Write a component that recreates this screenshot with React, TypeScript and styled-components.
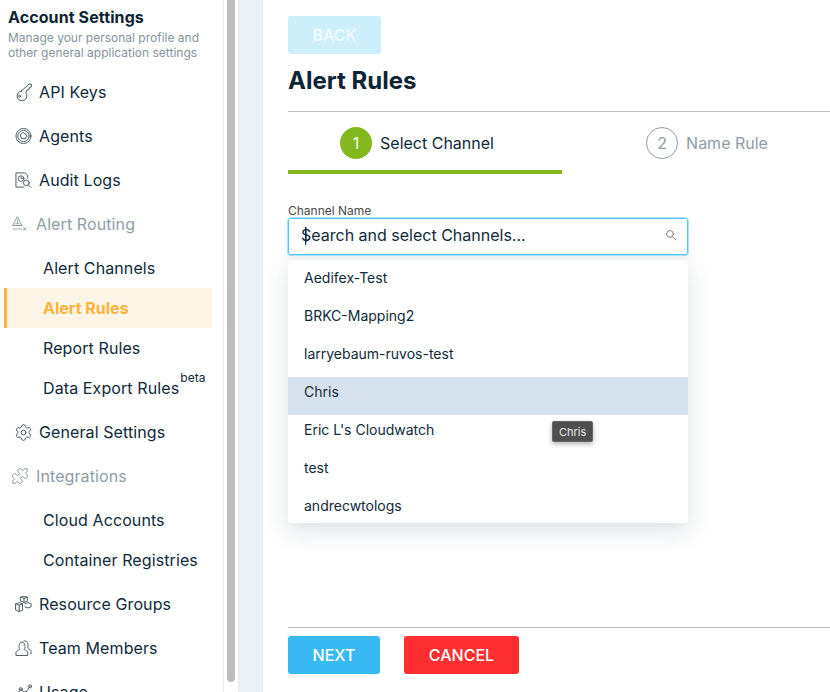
import React from 'react';
import styled, { createGlobalStyle } from 'styled-components';
import { Puzzle, Settings } from 'lucide-react';

const GlobalStyle = createGlobalStyle`
  html, body { margin: 0; padding: 0; height: 100%; overflow: hidden; background: #fff; }
  body { font-family: Inter, "Liberation Sans", sans-serif; color: #0f2a3a; }
  #root { height: 100%; }
  * { box-sizing: border-box; }
`;

const Page = styled.div`
  display: flex;
  height: 692px;
  width: 830px;
  overflow: hidden;
`;
const Sidebar = styled.aside`
  width: 224px;
  flex: none;
  height: 692px;
  overflow: hidden;
  padding: 8px 0 0 4px;
  border-right: 1px solid #ebebeb;
`;
const SideTitle = styled.h2`
  margin: 0 0 0 4px;
  font-size: 16px;
  line-height: 18px;
  font-weight: 700;
  letter-spacing: 0.1px;
  color: #0c2433;
`;
const SideText = styled.p`
  margin: 4px 0 10px 4px;
  font-size: 12px;
  line-height: 15px;
  color: #85949e;
`;
const NavItem = styled.div<{ $muted?: boolean }>`
  display: flex;
  align-items: center;
  gap: ${p => (p.$muted ? '8px' : '7px')};
  height: 44px;
  padding-left: ${p => (p.$muted ? '8px' : '11px')};
  font-size: 16px;
  letter-spacing: 0.1px;
  color: ${p => (p.$muted ? '#8f9da6' : '#0f2a3a')};
  white-space: nowrap;
`;
const SubItem = styled.div<{ $active?: boolean }>`
  display: flex;
  align-items: center;
  height: 40px;
  width: 208px;
  padding-left: ${p => (p.$active ? '36px' : '39px')};
  font-size: 16px;
  letter-spacing: ${p => (p.$active ? '0' : '0.1px')};
  font-weight: ${p => (p.$active ? 700 : 400)};
  color: ${p => (p.$active ? '#ffb337' : '#0f2a3a')};
  background: ${p => (p.$active ? '#fff5e7' : 'transparent')};
  border-left: ${p => (p.$active ? '3px solid #ffb337' : 'none')};
  white-space: nowrap;
`;
const Beta = styled.sup`
  font-size: 12px;
  line-height: 12px;
  align-self: flex-start;
  margin: 4px 0 0 1px;
`;
const SubGroup = styled.div`
  margin: 2px 0;
`;
const Track = styled.div`
  width: 15px;
  flex: none;
  padding: 0 2px 0 3px;
  border-right: 1px solid #ebebeb;
`;
const Thumb = styled.div`
  width: 8px;
  height: 682px;
  background: #bdbdbd;
  border-radius: 0 0 4px 4px;
`;
const Gutter = styled.div`
  width: 24px;
  flex: none;
  background: #ebf0f5;
`;
const Main = styled.main`
  flex: 1;
  min-width: 0;
  display: flex;
  flex-direction: column;
  padding: 16px 0 0 25px;
`;
const Button = styled.button<{ $bg: string; $w: number; $off?: boolean }>`
  width: ${p => p.$w}px;
  height: 38px;
  border: 0;
  border-radius: 3px;
  background: ${p => p.$bg};
  color: ${p => (p.$off ? 'rgba(255,255,255,.75)' : '#fff')};
  font: 500 16px Inter, "Liberation Sans", sans-serif;
`;
const Title = styled.h1`
  margin: 12px 0 15px;
  font-size: 24px;
  line-height: 30px;
  font-weight: 700;
  color: #0c2433;
`;
const Rule = styled.div`
  height: 1px;
  background: #bfbfbf;
`;
const Steps = styled.div`
  display: flex;
  margin-top: 16px;
  height: 47px;
`;
const Step = styled.div<{ $on?: boolean }>`
  width: 274px;
  flex: none;
  height: 46px;
  padding: ${p => (p.$on ? '0 16px 13px 0' : '0 0 13px 16px')};
  display: flex;
  justify-content: center;
  align-items: center;
  gap: 8px;
  border-bottom: ${p => (p.$on ? '4px solid #83b81f' : '4px solid transparent')};
  font-size: 16px;
  color: ${p => (p.$on ? '#0f2a3a' : '#8f9da6')};
`;
const StepNum = styled.span<{ $on?: boolean }>`
  width: 32px;
  height: 32px;
  border-radius: 50%;
  display: flex;
  align-items: center;
  justify-content: center;
  font-size: 16px;
  color: ${p => (p.$on ? '#fff' : '#8f9da6')};
  background: ${p => (p.$on ? '#83b81f' : '#fff')};
  border: ${p => (p.$on ? 'none' : '1px solid #8f9da6')};
`;
const Field = styled.div`
  position: relative;
  width: 400px;
  margin-top: 29px;
`;
const Label = styled.label`
  display: block;
  font-size: 12px;
  line-height: 14px;
  color: #4a4a4a;
`;
const SearchBox = styled.div`
  display: flex;
  align-items: center;
  justify-content: space-between;
  height: 37px;
  padding: 0 10px 3px 12px;
  border: 1px solid #52c7f6;
  border-radius: 3px;
  box-shadow: 0 0 0 1px #a8e4fb, 0 6px 10px rgba(40, 60, 80, 0.05);
  font-size: 16px;
  color: #0f2a3a;
`;
const Caret = styled.span`
  display: inline-block;
  width: 1px;
  height: 18px;
  background: #0c2433;
  vertical-align: -4px;
  margin: 0 -5px 0 4px;
`;
const Menu = styled.ul`
  position: absolute;
  left: 0;
  right: 0;
  top: 56px;
  height: 263px;
  margin: 0;
  padding: 3px 0 0;
  list-style: none;
  background: #fff;
  border-radius: 4px;
  box-shadow: 0 8px 24px rgba(40, 60, 80, 0.16);
  overflow: hidden;
`;
const MenuItem = styled.li<{ $hover?: boolean }>`
  height: 38px;
  padding: 3px 16px 0;
  font-size: 14px;
  line-height: 24px;
  color: #0f2a3a;
  background: ${p => (p.$hover ? '#d7e2ef' : '#fff')};
`;
const Tip = styled.div`
  position: absolute;
  left: 264px;
  top: 217px;
  height: 21px;
  padding: 0 6px;
  display: flex;
  align-items: center;
  font-size: 11px;
  color: #e8e8e8;
  background: #4f4f4f;
  border: 1px solid #666;
  border-radius: 2px;
  box-shadow: 0 2px 5px rgba(0, 0, 0, 0.3);
`;
const Footer = styled.div`
  margin-top: auto;
  height: 65px;
`;
const FooterRow = styled.div`
  display: flex;
  gap: 24px;
  margin-top: 8px;
`;

const Svg = styled.svg`
  width: 17px;
  height: 18px;
  flex: none;
  fill: none;
  stroke: currentColor;
  stroke-width: 1;
  stroke-linecap: round;
  stroke-linejoin: round;
  color: #44565f;
`;
const MutedSvg = styled(Svg)`
  width: 16px;
  color: #8f9da6;
`;
const GearIcon = styled(Settings)`
  width: 19px;
  height: 19px;
  margin: 0 -1px;
  flex: none;
  stroke-width: 1.2;
  color: #44565f;
`;
const PuzzleIcon = styled(Puzzle)`
  width: 18px;
  height: 18px;
  margin: 0 -1px;
  flex: none;
  stroke-width: 1.2;
  color: #7f8e98;
`;

const KeyIcon = () => (
  <Svg viewBox="0 0 17 18">
    <path d="M6.4 8 L14 1.2 H16.4 V3.8 L14.4 4.6 L14 6.6 L12 7 L10.8 9.8 A4.9 4.9 0 1 1 6.4 8 Z" />
    <circle cx="4.6" cy="13.2" r="1" />
  </Svg>
);
const AgentIcon = () => (
  <Svg viewBox="0 0 18 18">
    <circle cx="9" cy="9" r="8" />
    <circle cx="9" cy="9" r="6" />
    <path d="M9 5.4 L12.4 8 L11 11.9 H7 L5.6 8 Z" />
  </Svg>
);
const AuditIcon = () => (
  <Svg viewBox="0 0 18 18">
    <path d="M9 16.5 H1 V1.5 H11 L13.5 4 V7" />
    <circle cx="6.5" cy="7.5" r="3" />
    <path d="M6.5 6 V7.5 H8" />
    <circle cx="12" cy="12" r="3" />
    <path d="M14.2 14.2 L16.8 16.8" />
  </Svg>
);
const AlertIcon = () => (
  <MutedSvg viewBox="0 0 16 18">
    <path d="M5.5 2 L10 10.5 H1 Z" />
    <path d="M5.5 5 V8 M3.5 8.8 H7.5" />
    <path d="M1 14 H10" strokeDasharray="1.5 1.2" />
    <path d="M11.5 12.5 L14 15 M14 12.5 L11.5 15" />
  </MutedSvg>
);
const BoxesIcon = () => (
  <Svg viewBox="0 0 18 18">
    <path d="M6 1.8 L9.5 0.8 L13 1.8 V6 L9.5 7.2 L6 6 Z M6 1.8 L9.5 3 L13 1.8 M9.5 3 V7.2" />
    <path d="M1 8.8 L4.5 7.6 L8 8.8 V15.5 L4.5 17 L1 15.5 Z M1 8.8 L4.5 10.2 L8 8.8 M4.5 10.2 V17" />
    <path d="M10.5 8.5 L13.8 7.5 L17 8.5 V12 L13.8 13.2 L10.5 12" />
  </Svg>
);
const TeamIcon = () => (
  <Svg viewBox="0 0 18 18">
    <path d="M1 16.5 V14 C1 12 4 11.5 5 10.5 C3.8 9 3.8 3 7.5 2.5 C11 3 11.2 9 10 10.5 C11 11.5 13.5 12 13.5 14 V16.5 Z" />
    <path d="M9.5 1.5 C13 1 14.5 4 13.5 9 C14.5 10.2 17 10.5 17 13 V15" />
  </Svg>
);
const UsageIcon = () => (
  <Svg viewBox="0 0 18 18">
    <path d="M1 13 L6 6 L11 10 L16 3" />
    <circle cx="6" cy="6" r="1.6" />
    <circle cx="11" cy="10" r="1.6" />
    <circle cx="16" cy="3" r="1.6" />
  </Svg>
);
const SearchIcon = styled(Svg).attrs({ viewBox: '0 0 12 12' })`
  width: 12px;
  height: 12px;
  color: #76858e;
`;

const channels = ['Aedifex-Test', 'BRKC-Mapping2', 'larryebaum-ruvos-test', 'Chris', "Eric L's Cloudwatch", 'test', 'andrecwtologs'];

function App() {
  return (
    <Page>
      <GlobalStyle />
      <Sidebar>
        <SideTitle>Account Settings</SideTitle>
        <SideText>Manage your personal profile and other general application settings</SideText>
        <NavItem><KeyIcon />API Keys</NavItem>
        <NavItem><AgentIcon />Agents</NavItem>
        <NavItem><AuditIcon />Audit Logs</NavItem>
        <NavItem $muted><AlertIcon />Alert Routing</NavItem>
        <SubGroup>
          <SubItem>Alert Channels</SubItem>
          <SubItem $active>Alert Rules</SubItem>
          <SubItem>Report Rules</SubItem>
          <SubItem>Data Export Rules<Beta>beta</Beta></SubItem>
        </SubGroup>
        <NavItem><GearIcon />General Settings</NavItem>
        <NavItem $muted><PuzzleIcon />Integrations</NavItem>
        <SubGroup>
          <SubItem>Cloud Accounts</SubItem>
          <SubItem>Container Registries</SubItem>
        </SubGroup>
        <NavItem><BoxesIcon />Resource Groups</NavItem>
        <NavItem><TeamIcon />Team Members</NavItem>
        <NavItem><UsageIcon />Usage</NavItem>
      </Sidebar>
      <Track><Thumb /></Track>
      <Gutter />
      <Main>
        <Button $bg="#cdeefb" $w={93} $off>BACK</Button>
        <Title>Alert Rules</Title>
        <Rule />
        <Steps>
          <Step $on><StepNum $on>1</StepNum>Select Channel</Step>
          <Step><StepNum>2</StepNum>Name Rule</Step>
        </Steps>
        <Field>
          <Label>Channel Name</Label>
          <SearchBox>
            <span><Caret />$earch and select Channels...</span>
            <SearchIcon>
              <circle cx="5" cy="5" r="3.4" />
              <path d="M7.6 7.6 L11 11" />
            </SearchIcon>
          </SearchBox>
          <Menu>
            {channels.map(c => <MenuItem key={c} $hover={c === 'Chris'}>{c}</MenuItem>)}
          </Menu>
          <Tip>Chris</Tip>
        </Field>
        <Footer>
          <Rule />
          <FooterRow>
            <Button $bg="#38b9f2" $w={92}>NEXT</Button>
            <Button $bg="#ff2e30" $w={115}>CANCEL</Button>
          </FooterRow>
        </Footer>
      </Main>
    </Page>
  );
}

export default App;
